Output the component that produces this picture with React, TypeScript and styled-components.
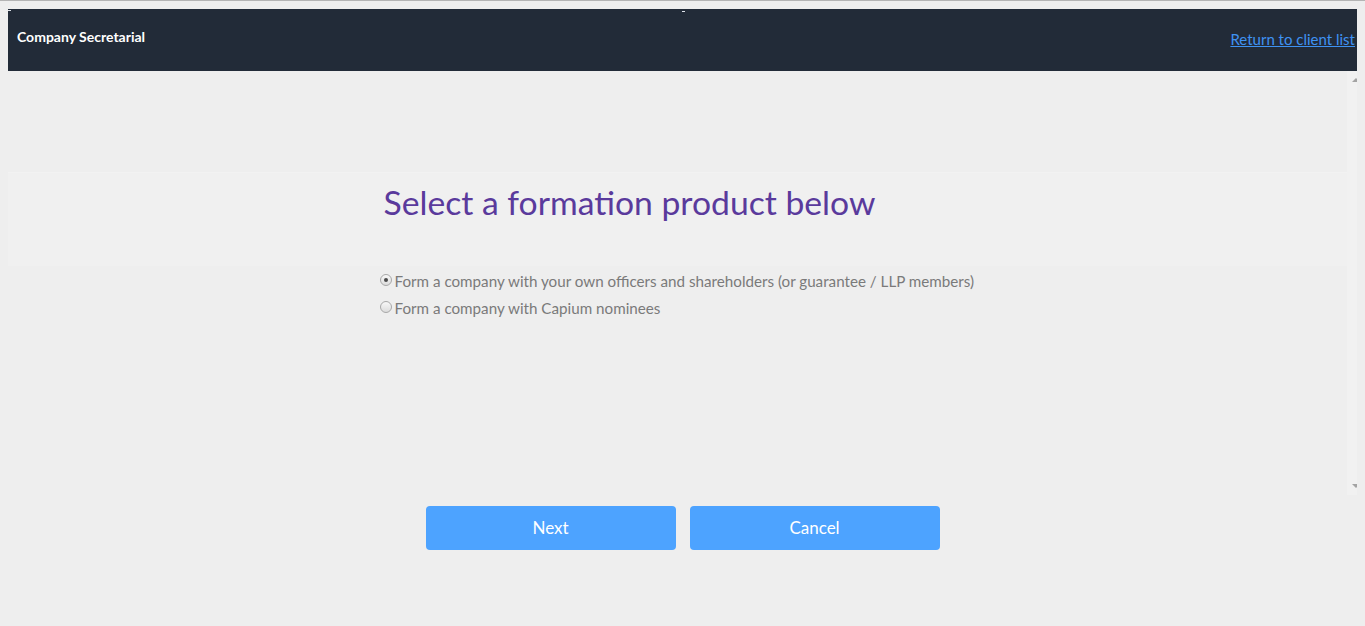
import React, { useState } from "react";
import styled, { createGlobalStyle } from "styled-components";

const GlobalStyle = createGlobalStyle`
  html {
    border-top: 1px solid #b4b4b4;
    background: #eeeeee;
  }
  body {
    margin: 8px;
    background: #eeeeee;
    font-family: Lato, "Noto Sans", "Liberation Sans", sans-serif;
    overflow: hidden;
  }
`;

const TopBar = styled.header`
  position: relative;
  height: 62px;
  background: #222b38;
  display: flex;
  justify-content: space-between;
  align-items: flex-start;
`;

const Tick = styled.span<{ $left: number; $top: number }>`
  position: absolute;
  left: ${(p) => p.$left}px;
  top: ${(p) => p.$top}px;
  width: 3px;
  height: 1px;
  background: #dfe3ea;
`;

const Brand = styled.div`
  color: #ffffff;
  font-size: 14px;
  font-weight: 700;
  padding: 19px 0 0 9px;
`;

const BackLink = styled.a`
  color: #3f92f2;
  font-size: 15px;
  text-decoration: underline;
  padding: 21px 2px 0 0;
  cursor: pointer;
`;

const Frame = styled.section`
  display: flex;
  height: 424px;
  margin-right: -8px;
`;

const FrameBody = styled.div`
  flex: 1;
  padding-top: 101px;
`;

const Band = styled.div`
  background: #f0f0f0;
  height: 93px;
  border-top: 1px solid #f2f2f2;
`;

const Column = styled.div`
  width: 606px;
  margin: 0 auto;
`;

const Heading = styled.h1`
  margin: 0;
  padding: 8px 0 0 9px;
  font-size: 33.7px;
  font-weight: 400;
  color: #5a3a9c;
  line-height: 42px;
`;

const Options = styled.div`
  display: flex;
  flex-direction: column;
  gap: 7px;
  padding-top: 5px;
`;

const Option = styled.label`
  display: flex;
  align-items: center;
  gap: 3px;
  color: #7a7a7a;
  font-size: 15.2px;
  line-height: 20px;
  cursor: pointer;
`;

const Radio = styled.input`
  appearance: none;
  width: 12px;
  height: 12px;
  margin: 0 0 3px 5px;
  border-radius: 50%;
  border: 1px solid #a8a8a8;
  background: linear-gradient(#f8f8f8, #dcdcdc);
  display: grid;
  place-items: center;
  &:checked::after {
    content: "";
    width: 4px;
    height: 4px;
    border-radius: 50%;
    background: #4a4a4a;
  }
`;

const Scrollbar = styled.div`
  width: 18px;
  background: #f1f1f1;
  display: flex;
  flex-direction: column;
  justify-content: space-between;
  align-items: center;
  padding: 7px 0;
`;

const Arrow = styled.span<{ $down?: boolean }>`
  width: 0;
  height: 0;
  border-left: 4px solid transparent;
  border-right: 4px solid transparent;
  ${(p) =>
    p.$down
      ? "border-top: 4px solid #a3a3a3;"
      : "border-bottom: 4px solid #a3a3a3;"}
`;

const Actions = styled.div`
  display: flex;
  justify-content: center;
  gap: 14px;
  padding-top: 11px;
`;

const Button = styled.button`
  width: 250px;
  height: 44px;
  padding-bottom: 2px;
  border: none;
  border-radius: 4px;
  background: #4da3ff;
  color: #ffffff;
  font-family: Lato, "Noto Sans", sans-serif;
  font-size: 17px;
  cursor: pointer;
`;

const choices = [
  "Form a company with your own officers and shareholders (or guarantee / LLP members)",
  "Form a company with Capium nominees",
];

export default function App() {
  const [picked, setPicked] = useState(0);
  return (
    <>
      <GlobalStyle />
      <TopBar>
        <Tick $left={0} $top={1} />
        <Tick $left={674} $top={2} />
        <Brand>Company Secretarial</Brand>
        <BackLink>Return to client list</BackLink>
      </TopBar>
      <Frame>
        <FrameBody>
          <Band>
            <Column>
              <Heading>Select a formation product below</Heading>
            </Column>
          </Band>
          <Column>
            <Options>
              {choices.map((c, i) => (
                <Option key={c}>
                  <Radio
                    type="radio"
                    name="product"
                    checked={picked === i}
                    onChange={() => setPicked(i)}
                  />
                  {c}
                </Option>
              ))}
            </Options>
          </Column>
        </FrameBody>
        <Scrollbar>
          <Arrow />
          <Arrow $down />
        </Scrollbar>
      </Frame>
      <Actions>
        <Button>Next</Button>
        <Button>Cancel</Button>
      </Actions>
    </>
  );
}
